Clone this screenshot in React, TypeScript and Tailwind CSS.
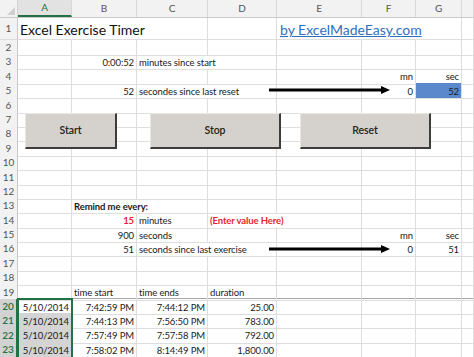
import React from "react";

type Cell = {
  t?: string;
  span?: number;
  r?: boolean;
  cls?: string;
};

const SPAN: Record<number, string> = { 1: "", 2: "col-span-2", 3: "col-span-3" };
const GRID = "grid grid-cols-[18px_54px_65px_71px_69px_85px_54px_46px_12px]";
const LETTERS = ["A", "B", "C", "D", "E", "F", "G", ""];

const e = (n: number): Cell[] => Array.from({ length: n }, () => ({}));
const red = "text-[#e3262d] font-bold";

const rows: Cell[][] = [
  [
    { t: "Excel Exercise Timer", span: 3, cls: "text-[14px] text-[#111] tracking-normal" },
    {},
    { t: "by ExcelMadeEasy.com", span: 3, cls: "text-[14px] text-[#2f6fc0] underline pl-[3px] tracking-normal" },
    {},
  ],
  e(8),
  [{}, { t: "0:00:52", r: true }, { t: "minutes since start", span: 2 }, ...e(4)],
  [...e(5), { t: "mn", r: true }, { t: "sec", r: true }, {}],
  [
    {},
    { t: "52", r: true },
    { t: "secondes since last reset", span: 2 },
    {},
    { t: "0", r: true },
    { t: "52", r: true, cls: "bg-[#5b88cc]" },
    {},
  ],
  ...Array.from({ length: 7 }, () => e(8)),
  [{}, { t: "Remind me every:", span: 2, cls: "font-bold" }, ...e(5)],
  [{}, { t: "15", r: true, cls: red }, { t: "minutes" }, { t: "(Enter value Here)", span: 2, cls: red }, ...e(3)],
  [{}, { t: "900", r: true }, { t: "seconds" }, {}, {}, { t: "mn", r: true }, { t: "sec", r: true }, {}],
  [
    {},
    { t: "51", r: true },
    { t: "seconds since last exercise", span: 2 },
    {},
    { t: "0", r: true },
    { t: "51", r: true },
    {},
  ],
  e(8),
  e(8),
  [{}, { t: "time start" }, { t: "time ends" }, { t: "duration" }, ...e(4)],
];

const log = [
  ["7:42:59 PM", "7:44:12 PM", "25.00"],
  ["7:44:13 PM", "7:56:50 PM", "783.00"],
  ["7:57:49 PM", "7:57:58 PM", "792.00"],
  ["7:58:02 PM", "8:14:49 PM", "1,800.00"],
];
log.forEach((l, i) => {
  rows.push([
    { t: "5/10/2014", r: true, cls: i > 0 ? "bg-[#d4d4d4]" : "" },
    { t: l[0], r: true },
    { t: l[1], r: true },
    { t: l[2], r: true },
    ...e(4),
  ]);
});

function Arrow({ top }: { top: number }) {
  return (
    <svg
      className="absolute left-[269px] w-[122px] h-[10px]"
      style={{ top }}
      viewBox="0 0 122 10"
    >
      <line x1="0" y1="5" x2="114" y2="5" stroke="#000" strokeWidth="3.2" />
      <polygon points="112,1 121,5 112,9" fill="#000" />
    </svg>
  );
}

function Btn({ label, w }: { label: string; w: string }) {
  return (
    <div
      className={
        "h-[36px] bg-[#d5d1cc] border-t border-l border-[#e9e7e4] border-r-2 border-b-2 border-r-[#3d3d3d] border-b-[#3d3d3d] flex items-center justify-center text-[10.5px] font-semibold text-[#222] " +
        w
      }
    >
      {label}
    </div>
  );
}

export default function App() {
  return (
    <div
      className="relative w-[474px] h-[357px] overflow-hidden bg-white text-[9.5px] tracking-[-0.1px] text-[#1a1a1a]"
      style={{ fontFamily: "Lato, 'Open Sans', sans-serif" }}
    >
      {/* column headers */}
      <div className={GRID + " h-[18px] bg-[#f2f2f2] border-b border-[#c9c9c9]"}>
        <div className="relative border-r border-[#d4d4d4]">
          <svg className="absolute right-[2px] bottom-[2px] w-[8px] h-[8px]" viewBox="0 0 8 8">
            <polygon points="8,0 8,8 0,8" fill="#cfcfcf" />
          </svg>
        </div>
        {LETTERS.map((l, i) => (
          <div
            key={i}
            className={
              "flex items-center justify-center border-r border-[#d9d9d9] text-[10px] " +
              (i === 0 ? "bg-[#e2e2e2] text-[#217346] border-b-2 border-b-[#217346]" : "text-[#555]")
            }
          >
            {l}
          </div>
        ))}
      </div>

      {/* rows */}
      {rows.map((row, ri) => {
        const n = ri + 1;
        const sel = n >= 20;
        return (
          <div
            key={ri}
            className={
              GRID +
              (n === 1 ? " h-[22px]" : " h-[14.4px]") +
              (n === 19 ? " border-b border-[#a8a8a8]" : "")
            }
          >
            <div
              className={
                "flex items-center justify-center text-[10px] tracking-normal border-b border-r " +
                (sel
                  ? "bg-[#d2d2d2] text-[#217346] font-semibold border-[#c6c6c6] border-r-[#217346] border-r-2"
                  : "bg-[#f2f2f2] text-[#555] border-[#dcdcdc] border-r-[#c9c9c9]")
              }
            >
              {n}
            </div>
            {row.map((c, ci) => (
              <div
                key={ci}
                className={
                  "flex items-end pb-[2px] px-[2px] whitespace-nowrap overflow-hidden border-r border-b border-[#dedede] leading-none " +
                  SPAN[c.span ?? 1] +
                  (c.r ? " justify-end" : "") +
                  (n === 1 ? " items-center pb-0" : "") +
                  (c.cls ? " " + c.cls : "")
                }
              >
                {c.t}
              </div>
            ))}
          </div>
        );
      })}

      {/* shapes floating over the sheet */}
      <div className="absolute top-[113px] left-[25px] flex">
        <Btn label="Start" w="w-[92px]" />
        <div className="w-[33px]" />
        <Btn label="Stop" w="w-[131px]" />
        <div className="w-[19px]" />
        <Btn label="Reset" w="w-[131px]" />
      </div>
      <Arrow top={85} />
      <Arrow top={244} />

      {/* selection A20:A23 */}
      <div className="absolute left-[17px] top-[298px] w-[56px] h-[62px] border-2 border-[#217346]" />
    </div>
  );
}
